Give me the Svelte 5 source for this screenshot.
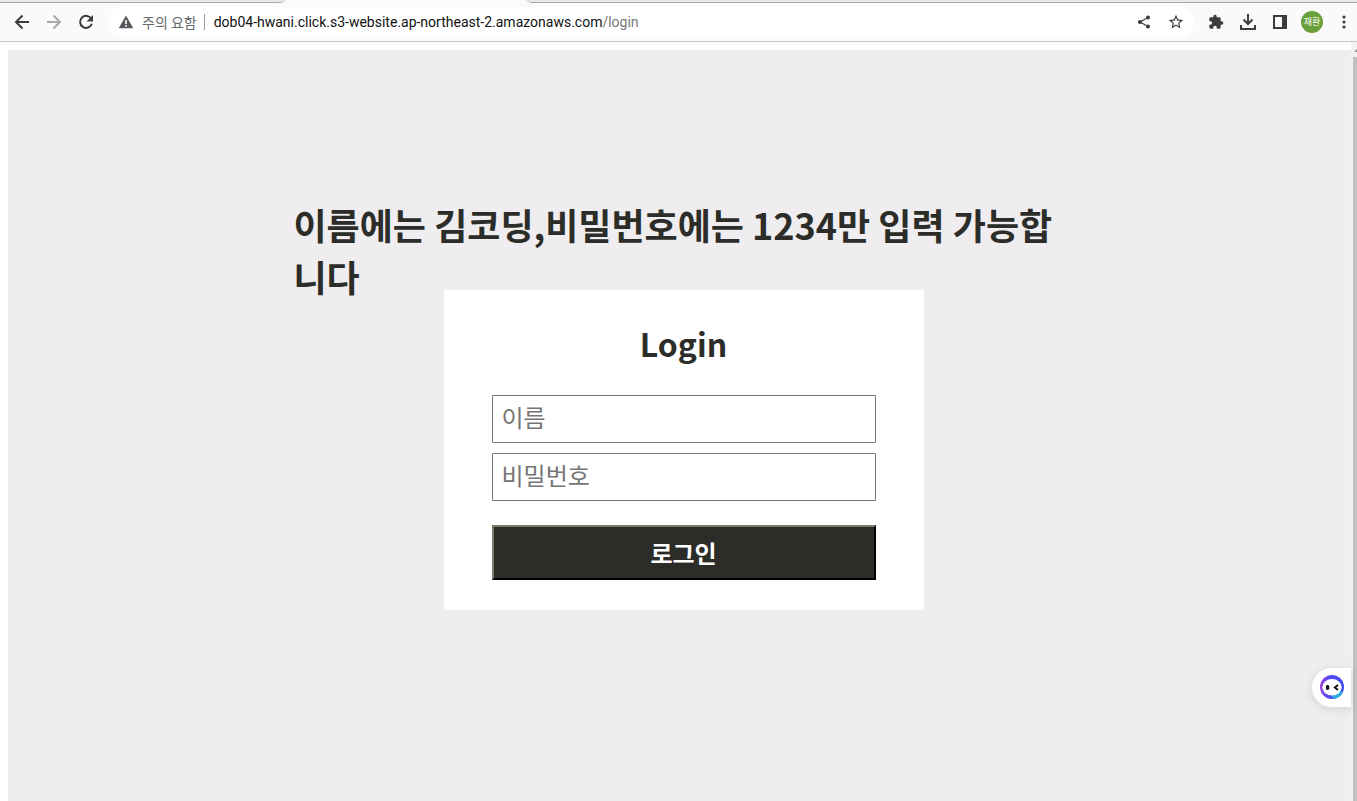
<script>
	let name = "";
	let password = "";
</script>

<style>
	:global(body) {
		background: #fff;
	}
	.window {
		display: flex;
		flex-direction: column;
		height: 100vh;
		overflow: hidden;
		font-family: "Noto Sans CJK KR", sans-serif;
		color: #2c2d28;
	}
	button {
		font-family: inherit;
		cursor: pointer;
	}

	/* browser bar */
	.tabs {
		display: flex;
		gap: 242px;
		height: 3px;
		background: #fafafa;
	}
	.tab-edge {
		box-sizing: border-box;
		background: #e8e8e8;
		border-bottom: 1px solid #a9a9a9;
	}
	.tab-edge.left {
		width: 285px;
		border-bottom-right-radius: 6px 3px;
	}
	.tab-edge.right {
		flex: 1;
		border-bottom-left-radius: 6px 3px;
	}
	.toolbar {
		display: flex;
		align-items: center;
		height: 38px;
		padding-left: 6px;
		background: #fafafa;
		border-bottom: 1px solid #c6c6c6;
	}
	.tool {
		display: flex;
		align-items: center;
		justify-content: center;
		width: 32px;
		height: 32px;
		padding: 0;
		border: 0;
		background: none;
		color: #3c3c3c;
	}
	.tool:disabled {
		color: #a8a8a8;
	}
	.toolbar > .tool:last-child {
		margin-right: -3px;
	}
	.tool svg {
		display: block;
	}
	.address {
		display: flex;
		align-items: center;
		flex: 1;
		height: 30px;
		margin: 0 6px;
		padding: 0 2px 0 10px;
		border-radius: 15px;
		background: #fff;
	}
	.warning {
		margin-right: 8px;
	}
	.security {
		padding-right: 7px;
		border-right: 1px solid #9a9a9a;
		font-size: 14px;
		line-height: 16px;
		color: #66696d;
	}
	.url {
		flex: 1;
		padding-left: 9px;
		font-family: Roboto, sans-serif;
		font-size: 14px;
		line-height: 20px;
		color: #111;
		text-decoration: none;
		white-space: nowrap;
	}
	.url span {
		color: #777;
	}
	.avatar {
		width: 22px;
		height: 22px;
		border-radius: 50%;
		background: #689f38;
		font-size: 9px;
		line-height: 22px;
		text-align: center;
		color: #fff;
	}

	/* page */
	.viewport {
		display: flex;
		flex: 1;
		min-height: 0;
	}
	.page {
		position: relative;
		flex: 1;
		margin: 8px 0 0 8px;
		padding: 148px 0 0 8px;
		background: #efedef;
	}
	h1 {
		max-width: 780px;
		margin: 0 auto -12px;
		font-size: 36px;
		line-height: 52px;
		word-break: break-all;
	}
	.card {
		position: relative;
		box-sizing: border-box;
		display: flex;
		flex-direction: column;
		width: 480px;
		margin: 0 auto;
		padding: 30px 48px;
		background: #fff;
	}
	h2 {
		margin: 0 0 29px;
		font-size: 32px;
		line-height: 46px;
		text-align: center;
	}
	.card input {
		box-sizing: border-box;
		height: 48px;
		margin: 0 0 10px;
		padding: 0 9px 6px;
		border: 1px solid #767676;
		border-radius: 1px;
		font-family: inherit;
		font-size: 24px;
	}
	.card input::placeholder {
		color: #757575;
	}
	.submit {
		height: 55px;
		margin-top: 14px;
		padding: 0;
		border: 2px solid;
		border-color: #7b7d6c #000 #000 #7b7d6c;
		background: #2c2d28;
		font-size: 24px;
		font-weight: bold;
		line-height: 35px;
		color: #fff;
	}
	.assistant {
		position: absolute;
		right: 0;
		bottom: 94px;
		display: flex;
		align-items: center;
		width: 39px;
		height: 39px;
		padding: 0 0 1px 8px;
		border: 0;
		border-radius: 20px 0 0 20px;
		background: #fff;
		box-shadow: 0 2px 10px #0000001f;
	}
	.scrollbar {
		box-sizing: border-box;
		width: 6px;
		padding: 7px 0 0 2px;
		background: #f1f1f1;
	}
	.arrow {
		width: 0;
		margin-left: 1px;
		border: 3px solid transparent;
		border-top: 0;
		border-bottom-color: #8b8b8b;
		border-right: 0;
	}
	.thumb {
		height: 100%;
		margin-top: 5px;
		background: #c1c1c1;
	}
</style>

<div class="window">
	<header>
		<div class="tabs">
			<div class="tab-edge left"></div>
			<div class="tab-edge right"></div>
		</div>
		<div class="toolbar">
			<button class="tool" aria-label="뒤로">
				<svg width="16" height="16" viewBox="0 0 16 16" fill="none" stroke="currentColor" stroke-width="2"><path d="M15 8H2M8.5 1.5L2 8l6.5 6.5" /></svg>
			</button>
			<button class="tool" aria-label="앞으로" disabled>
				<svg width="16" height="16" viewBox="0 0 16 16" fill="none" stroke="currentColor" stroke-width="2"><path d="M1 8h13M7.5 1.5L14 8l-6.5 6.5" /></svg>
			</button>
			<button class="tool" aria-label="새로고침">
				<svg width="16" height="16" viewBox="0 0 16 16"><path d="M13.4 5A6 6 0 1 0 13.8 9.8" fill="none" stroke="currentColor" stroke-width="2" /><path d="M15 1v6.5H8.5z" fill="currentColor" /></svg>
			</button>
			<div class="address">
				<svg class="warning" width="16" height="16" viewBox="0 0 16 16"><path d="M8 1.5L.7 14.3h14.6z" fill="#55585c" /><path d="M7.2 6h1.6v4H7.2zM7.2 11h1.6v1.7H7.2z" fill="#fff" /></svg>
				<span class="security">주의 요함</span>
				<a class="url" href="/login">dob04-hwani.click.s3-website.ap-northeast-2.amazonaws.com<span>/login</span></a>
				<button class="tool" aria-label="공유">
					<svg width="14" height="14" viewBox="0 0 14 14" fill="currentColor"><path d="M11 2.5L3 7l8 4.5" fill="none" stroke="currentColor" stroke-width="1.2" /><circle cx="11" cy="2.5" r="2" /><circle cx="3" cy="7" r="2.1" /><circle cx="11" cy="11.5" r="2" /></svg>
				</button>
				<button class="tool" aria-label="북마크">
					<svg width="16" height="16" viewBox="1 1 22 22" fill="currentColor"><path d="M22 9.24l-7.19-.62L12 2 9.19 8.63 2 9.24l5.46 4.73L5.82 21 12 17.27 18.18 21l-1.63-7.03L22 9.24zM12 15.4l-3.76 2.27 1-4.28-3.32-2.88 4.38-.38L12 6.1l1.71 4.04 4.38.38-3.32 2.88 1 4.28L12 15.4z" /></svg>
				</button>
			</div>
			<button class="tool" aria-label="확장 프로그램">
				<svg width="16" height="16" viewBox="0 0 24 24" fill="currentColor"><path d="M20.5 11H19V7c0-1.1-.9-2-2-2h-4V3.5a2.5 2.5 0 0 0-5 0V5H4c-1.1 0-2 .9-2 2v3.8h1.5a2.7 2.7 0 0 1 0 5.4H2V20c0 1.1.9 2 2 2h3.8v-1.5a2.7 2.7 0 0 1 5.4 0V22H17c1.1 0 2-.9 2-2v-4h1.5a2.5 2.5 0 0 0 0-5z" /></svg>
			</button>
			<button class="tool" aria-label="다운로드">
				<svg width="16" height="16" viewBox="0 0 16 16" fill="none" stroke="currentColor" stroke-width="2"><path d="M8 0v9.5M3.5 5.5L8 10l4.5-4.5M1 11v4h14v-4" /></svg>
			</button>
			<button class="tool" aria-label="측면 패널">
				<svg width="14" height="14" viewBox="0 0 14 14" fill="currentColor"><path d="M0 0h14v14H0zM2 2v10h7V2z" fill-rule="evenodd" /></svg>
			</button>
			<button class="tool" aria-label="프로필"><span class="avatar">재환</span></button>
			<button class="tool" aria-label="메뉴">
				<svg width="4" height="14" viewBox="0 0 4 14" fill="currentColor"><circle cx="2" cy="2" r="1.6" /><circle cx="2" cy="7" r="1.6" /><circle cx="2" cy="12" r="1.6" /></svg>
			</button>
		</div>
	</header>
	<div class="viewport">
		<main class="page">
			<h1>이름에는 김코딩,비밀번호에는 1234만 입력 가능합니다</h1>
			<form class="card" on:submit|preventDefault>
				<h2>Login</h2>
				<input type="text" placeholder="이름" aria-label="이름" bind:value={name} />
				<input type="password" placeholder="비밀번호" aria-label="비밀번호" bind:value={password} />
				<button class="submit">로그인</button>
			</form>
			<button class="assistant" aria-label="도우미">
				<svg width="24" height="24" viewBox="0 0 24 24">
					<defs>
						<linearGradient id="ring" x1="0" y1=".6" x2="1" y2=".7">
							<stop offset="0" stop-color="#a741df" />
							<stop offset=".3" stop-color="#5547ee" />
							<stop offset="1" stop-color="#3b4df5" />
						</linearGradient>
					</defs>
					<circle cx="12" cy="12" r="12" fill="url(#ring)" />
					<path d="M13 24a12 12 0 0 0 10-7l-4-1-7 5z" fill="#27aee4" />
					<ellipse cx="12" cy="12.3" rx="9.7" ry="8.3" fill="#fff" />
					<rect x="6" y="10" width="3.2" height="5" rx="1.4" fill="#111" />
					<path d="M18 10l-3.2 2.5L18 15" fill="none" stroke="#111" stroke-width="1.9" />
				</svg>
			</button>
		</main>
		<div class="scrollbar">
			<div class="arrow"></div>
			<div class="thumb"></div>
		</div>
	</div>
</div>
